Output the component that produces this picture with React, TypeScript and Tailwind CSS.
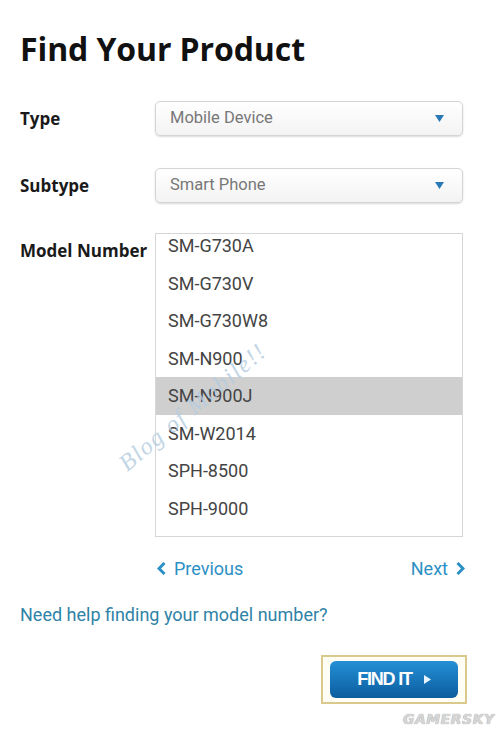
import React from "react";

const models = [
  "SM-G730A",
  "SM-G730V",
  "SM-G730W8",
  "SM-N900",
  "SM-N900J",
  "SM-W2014",
  "SPH-8500",
  "SPH-9000",
];

const SelectBox = ({ value }: { value: string }) => (
  <div className="flex h-[35px] w-[308px] items-center justify-between rounded-[5px] border border-[#d4d4d4] bg-gradient-to-b from-white to-[#f3f3f3] pl-[14px] pr-[18px] shadow-[0_1px_2px_rgba(0,0,0,0.15)]">
    <span className="text-[16.5px] text-[#777]">{value}</span>
    <svg width="9" height="7" viewBox="0 0 9 7">
      <path d="M0 0h9L4.5 7z" fill="#2a78b4" />
    </svg>
  </div>
);

export default function App() {
  return (
    <div className="relative h-[731px] w-[500px] overflow-hidden bg-white pl-[20px] font-['Roboto',sans-serif]">
      <h1 className="pt-[30px] text-[32px] font-bold leading-[38px] text-[#111] font-['Open_Sans',sans-serif] tracking-[-0.1px]">
        Find Your Product
      </h1>

      <div className="mt-[33px] flex items-center">
        <div className="w-[135px] text-[17px] font-bold text-[#1a1a1a] font-['Open_Sans',sans-serif]">Type</div>
        <SelectBox value="Mobile Device" />
      </div>

      <div className="mt-[32px] flex items-center">
        <div className="w-[135px] text-[17px] font-bold text-[#1a1a1a] font-['Open_Sans',sans-serif]">Subtype</div>
        <SelectBox value="Smart Phone" />
      </div>

      <div className="mt-[30px] flex items-start">
        <div className="w-[135px] pt-[5px] text-[17px] font-bold text-[#1a1a1a] font-['Open_Sans',sans-serif]">Model Number</div>
        <div className="h-[304px] w-[308px] overflow-hidden border border-[#d6d6d6] bg-white">
          <div className="-mt-[7px] flex flex-col">
            {models.map((m) => (
              <div
                key={m}
                className={`flex h-[37.5px] items-center pl-[12px] text-[18px] text-[#444] ${
                  m === "SM-N900J" ? "bg-[#cfcfcf]" : ""
                }`}
              >
                {m}
              </div>
            ))}
          </div>
        </div>
      </div>

      <div className="ml-[137px] mt-[18px] flex w-[308px] items-center justify-between text-[18px] text-[#2b90c4]">
        <div className="flex items-center gap-[7px]">
          <svg width="10" height="13" viewBox="0 0 10 13">
            <path d="M7.5 1L2 6.5 7.5 12" fill="none" stroke="#2b90c4" strokeWidth="3" />
          </svg>
          <span>Previous</span>
        </div>
        <div className="flex items-center gap-[7px]">
          <span>Next</span>
          <svg width="10" height="13" viewBox="0 0 10 13">
            <path d="M2.5 1L8 6.5 2.5 12" fill="none" stroke="#2b90c4" strokeWidth="3" />
          </svg>
        </div>
      </div>

      <div className="mt-[19px] text-[18px] text-[#2f83a6]">Need help finding your model number?</div>

      <div className="mt-[27px] flex justify-end pr-[33px]">
        <div className="border-[2px] border-[#d9c98d] bg-[#fffdf4] px-[7px] py-[4px]">
          <div className="flex h-[37px] w-[128px] items-center justify-center gap-[12px] rounded-[6px] bg-gradient-to-b from-[#2590d6] to-[#0b5d9e] text-white">
            <span className="text-[18px] font-bold tracking-[-1.2px] font-['Liberation_Sans',sans-serif]">FIND IT</span>
            <svg width="7" height="9" viewBox="0 0 7 9">
              <path d="M0 0l7 4.5L0 9z" fill="#e8f4ff" />
            </svg>
          </div>
        </div>
      </div>

      <div className="absolute left-[403px] top-[709px] text-[14px] font-bold italic tracking-[0.5px] text-[#d6d6d6] [text-shadow:0_0_1px_#888] font-['DejaVu_Sans',sans-serif]">
        GAMERSKY
      </div>

      <div className="pointer-events-none absolute left-[122px] top-[448px] origin-left -rotate-[40deg] text-[24px] italic tracking-[1.5px] text-[#b4cce0] opacity-80 font-['Liberation_Serif',serif]">
        Blog of Mobile!!
      </div>
    </div>
  );
}
